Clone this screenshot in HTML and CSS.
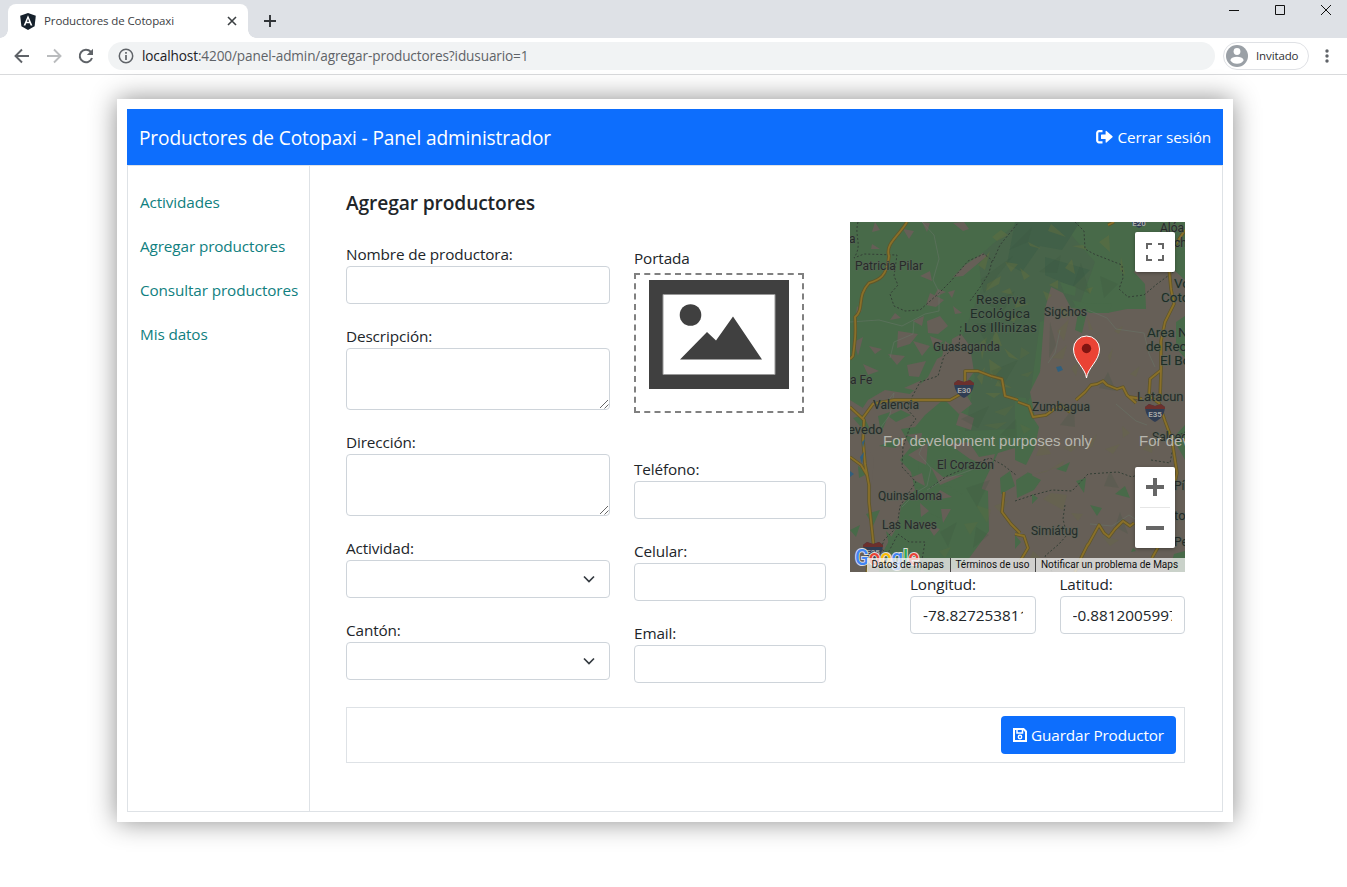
FILE: index.html
```html
<!DOCTYPE html>
<html lang="es">
<head>
<meta charset="utf-8">
<title>Productores de Cotopaxi</title>
<link rel="stylesheet" href="styles.css">
</head>
<body>
<header class="browser">
  <div class="tabstrip">
    <div class="tab">
      <svg class="favicon" width="16" height="17" viewBox="0 0 16 17"><path d="M8 0 15.8 2.8 14.6 13.2 8 17 1.4 13.2.2 2.8Z" fill="#15202b"/><path d="M8 2.3 3.6 12.6H5.4L6.3 10.3H9.7L10.6 12.6H12.4ZM8 5.8 9.1 8.7H6.9Z" fill="#fff" fill-rule="evenodd"/></svg>
      <span class="tab-title">Productores de Cotopaxi</span>
      <svg width="10" height="10" viewBox="0 0 10 10"><path d="M1 1 9 9M9 1 1 9" stroke="#3c4043" stroke-width="1.6"/></svg>
    </div>
    <svg class="newtab" width="12" height="12" viewBox="0 0 12 12"><path d="M6 0V12M0 6H12" stroke="#303337" stroke-width="1.9"/></svg>
    <svg class="window-buttons" width="104" height="12" viewBox="0 0 104 12"><path d="M0 6.5H10M46.500 1.500H55.500V10.500H46.500ZM92 1 102 11M102 1 92 11" fill="none" stroke="#111"/></svg>
  </div>
  <div class="toolbar">
    <div class="nav-icons">
      <svg width="16" height="16" viewBox="0 0 16 16"><path d="M15 8H2M8 1.500 1.500 8 8 14.500" fill="none" stroke="#5f6368" stroke-width="1.9"/></svg>
      <svg width="16" height="16" viewBox="0 0 16 16"><path d="M1 8H14M8 1.500 14.500 8 8 14.500" fill="none" stroke="#babcbe" stroke-width="1.9"/></svg>
      <svg width="16" height="16" viewBox="0 0 16 16"><path d="M14 10A6.300 6.300 0 1 1 12.700 3.700L14 5" fill="none" stroke="#5f6368" stroke-width="2"/><path d="M15 .8V7H8.800Z" fill="#5f6368"/></svg>
    </div>
    <div class="address">
      <svg width="16" height="16" viewBox="0 0 16 16"><circle cx="8" cy="8" r="6.700" fill="none" stroke="#5f6368" stroke-width="1.500"/><path d="M8 7V12M8 4V5.700" stroke="#5f6368" stroke-width="1.700"/></svg>
      <span class="url"><b>localhost</b>:4200/panel-admin/agregar-productores?idusuario=1</span>
    </div>
    <div class="profile">
      <svg width="22" height="22" viewBox="0 0 22 22"><circle cx="11" cy="11" r="11" fill="#9aa0a6"/><circle cx="11" cy="6.500" r="3.400" fill="#fff"/><path d="M4.300 15.200C5 12.800 8 11.800 11 11.800S17 12.800 17.700 15.200C16.300 17.500 14 18.800 11 18.800S5.700 17.500 4.300 15.200Z" fill="#fff"/></svg>
      <span>Invitado</span>
    </div>
    <svg class="dots" width="4" height="14" viewBox="0 0 4 14" fill="#5f6368"><circle cx="2" cy="2" r="1.700"/><circle cx="2" cy="7" r="1.700"/><circle cx="2" cy="12" r="1.700"/></svg>
  </div>
</header>

<main class="page">
  <section class="card">
    <div class="navbar">
      <span class="brand">Productores de Cotopaxi - Panel administrador</span>
      <a class="logout">
        <svg width="17" height="14" viewBox="0 0 17 14"><path d="M6.500 1.200H3A1.800 1.800 0 0 0 1.200 3V10.500A1.800 1.800 0 0 0 3 12.300H6.500" fill="none" stroke="#fff" stroke-width="2.200"/><path d="M5.600 4.500H9.600V1.300Q9.700.4 10.500 1L16.500 6.200Q16.900 6.700 16.500 7.200L10.500 12.500Q9.700 13 9.600 12.200V9H5.600Q5 9 5 8.400V5.100Q5 4.500 5.600 4.500Z" fill="#fff"/></svg>
        <span>Cerrar sesión</span>
      </a>
    </div>
    <div class="body">
      <nav class="sidebar"><a>Actividades</a><a>Agregar productores</a><a>Consultar productores</a><a>Mis datos</a></nav>
      <div class="content">
        <div class="columns">
          <div class="col col-data">
            <h1>Agregar productores</h1>
            <div class="field"><label>Nombre de productora:</label><div class="input"></div></div>
            <div class="field"><label>Descripción:</label><div class="input area"><svg class="grip" width="10" height="10" viewBox="0 0 10 10"><path d="M1 9 9 1M5.500 9.500 9.500 5.500" stroke="#666"/></svg></div></div>
            <div class="field"><label>Dirección:</label><div class="input area"><svg class="grip" width="10" height="10" viewBox="0 0 10 10"><path d="M1 9 9 1M5.500 9.500 9.500 5.500" stroke="#666"/></svg></div></div>
            <div class="field"><label>Actividad:</label><div class="input select"><svg width="12" height="8" viewBox="0 0 12 8"><path d="M1 1.500 6 6.500 11 1.500" fill="none" stroke="#343a40" stroke-width="1.700"/></svg></div></div>
            <div class="field"><label>Cantón:</label><div class="input select"><svg width="12" height="8" viewBox="0 0 12 8"><path d="M1 1.500 6 6.500 11 1.500" fill="none" stroke="#343a40" stroke-width="1.700"/></svg></div></div>
          </div>
          <div class="col col-contact">
            <label class="cover-label">Portada</label>
            <div class="cover">
              <svg width="140" height="109" viewBox="0 0 140 109"><path d="M0 0H140V109H0Z" fill="#404040"/><path d="M14 14.500H126V94.500H14Z" fill="#fff" stroke="#999"/><circle cx="41.500" cy="35" r="10.800" fill="#404040"/><path d="M31 79.500 58 52 67 60.500 84 36.500 113 79.500Z" fill="#404040"/></svg>
            </div>
            <div class="field"><label>Teléfono:</label><div class="input"></div></div>
            <div class="field"><label>Celular:</label><div class="input"></div></div>
            <div class="field"><label>Email:</label><div class="input"></div></div>
          </div>
          <div class="col col-map">
            <div class="map">
              <svg width="335" height="350" viewBox="0 0 335 350">
                <rect width="335" height="350" fill="#486a49"/>
                <!-- highland relief -->
                <path d="M128 35 168 0H210L245 40 230 82 190 100 180 175 165 207 115 209 125 155 112 115 132 65Z" fill="#48644a"/>
                <path d="M165 0H230L212 28 190 24 172 50 157 42ZM195 35 240 48 223 65 195 53Z" fill="#416048"/>
                <!-- lowland farmland -->
                <path d="M111 112 120 124 124 150 112 166 122 182 109 192 94 177 75 193 65 205 51 207 61 225 50 238 61 250 65 268 51 284 48 303 35 326 27 350H0V205L18 178 35 168 60 172 78 155 87 137 101 129 102 117Z" fill="#665f57"/>
                <path d="M201 65 213 71 221 86 257 91 277 87 296 87 295 62 284 50 293 38 310 45 335 30V350H70L80 325 102 315 120 300 134 260 148 231 171 224 165 209 185 195 180 170 190 150 195 87Z" fill="#665f57"/>
                <path d="M0 178 16 188 14 220 24 236 20 280 29 350H0Z" fill="#665f57"/>
                <!-- brown clearings in the forest -->
                <path d="M25 0 30 8 22 10ZM22 22 30 27 21 27ZM53 7 64 9 59 17ZM72 0 77 10 80 1ZM103 1 113 9 119 7 114 0ZM70 54 80 49 82 59ZM80 71 94 78 86 85 76 83ZM88 67 96 70 83 76ZM103 55 115 43 133 31 137 34 113 54ZM77 99 90 94 98 104 88 112 78 111ZM63 99 74 94 72 104ZM45 91 51 96 40 98ZM19 124 32 127 25 132ZM48 109 68 112 60 122 47 126ZM38 132 55 134 47 143ZM13 142 29 149 18 153ZM57 143 76 139 69 155 59 154ZM95 119 109 129 91 141ZM63 119 80 124 72 134ZM80 114 93 119 84 126ZM54 166 72 158 68 169ZM7 84 12 89 6 92ZM4 120 13 115 8 134ZM98 70 105 68 102 76ZM112 91 103 84 105 92Z" fill="#665f57"/>
                <!-- green islands in farmland -->
                <g fill="#486a49">
                  <path d="M3 196 13 193 20 207 10 204ZM28 194 40 190 31 211ZM8 244 19 251 9 256ZM16 292 30 288 23 304ZM0 308 10 303 6 315ZM38 194 51 188 61 193 46 200ZM29 224 50 215 46 226ZM36 309 49 322 40 328Z"/>
                  <path d="M165 175 176 176 179 190 189 205 185 225 176 243 165 238ZM166 258 177 251 191 258 184 268 167 276ZM206 247 220 240 216 250ZM226 259 236 256 234 271ZM265 272 275 264 280 276ZM240 283 252 286 247 294ZM182 272 188 276 182 282ZM165 313 171 320 165 327ZM222 78 238 82 262 81 259 91 240 91 226 85ZM228 91 236 94 232 111 225 108ZM210 60 226 65 225 74 214 71ZM326 100 335 94V136L326 126ZM315 40 335 29V58ZM323 216 335 203V238ZM324 332 335 329V350H319ZM177 250 182 252 184 261ZM283 326 286 329 281 330Z"/>
                  <path d="M68 229 90 213 111 211 132 223 125 247 105 258 82 260 69 248ZM66 266 99 264 113 273 101 301 79 291 65 281ZM92 294 120 263 138 269 139 309 112 346 76 350 57 340 76 321ZM150 256 160 249 165 264 151 272Z"/>
                </g>
                <path d="M58 233 78 221 76 243 66 238ZM60 256 72 251 75 264ZM81 245 93 255 114 253 90 263ZM90 268 102 275 84 278ZM99 222 119 220 129 235 145 232 141 245 120 237ZM70 281 79 289 71 295ZM91 287 101 287 93 301ZM77 303 90 307 84 314ZM110 190 124 196 121 208 106 203ZM55 213 72 211 71 218Z" fill="#665f57"/>
                <!-- vegetation facets -->
                <g fill="#66703d" opacity=".42">
                  <path d="M128 43 140 29 135 48ZM142 15 151 8 158 13 147 19ZM137 62 151 54 149 62 136 69ZM155 40 168 42 161 50ZM151 70 160 66 163 73ZM139 137 152 146 141 158ZM145 105 152 124 142 122ZM154 126 169 138 159 135ZM127 155 135 145 132 163ZM148 158 162 166 145 164ZM135 171 151 171 144 176ZM170 46 180 54 174 58ZM178 20 192 27 180 24ZM201 2 216 15 198 9ZM222 24 233 23 238 28ZM215 46 222 37 225 52ZM199 63 208 58 208 67ZM211 84 221 93 213 96ZM193 69 202 73 197 79ZM249 20 259 13 260 30ZM236 67 243 65 240 72ZM271 35 275 53 270 48ZM155 96 170 91 164 100ZM166 77 179 82 165 86ZM130 121 137 115 132 138Z"/>
                  <path opacity=".55" d="M207 109 219 97 214 119ZM202 136 217 123 213 137ZM221 146 229 140 226 154ZM237 94 243 108 239 108ZM258 134 263 126 260 141ZM171 125 180 131 170 137ZM170 153 183 149 178 155ZM186 234 193 216 201 232ZM196 250 215 238 212 244 185 252ZM193 277 201 271 217 273 213 288ZM170 202 181 207 174 212ZM221 291 233 292 228 299ZM213 225 229 222 221 230ZM272 204 280 211 273 216ZM255 227 270 222 263 232ZM126 283 141 288 137 301ZM114 302 128 300 120 313ZM89 329 101 325 95 336ZM144 284 159 278 151 291ZM183 329 193 338 180 336ZM252 314 269 318 260 324ZM235 226 247 212 242 225ZM280 152 290 144 286 155ZM264 109 273 104 269 112ZM292 227 304 218 302 231ZM144 190 164 183 155 194ZM133 203 157 200 147 207Z"/>
                </g>
                <g fill="#38513e" opacity=".18"><path d="M130 58 163 34 134 71ZM139 83 165 69 153 90ZM125 102 154 100 137 122ZM159 28 182 5 178 20ZM189 50 211 33 207 51ZM231 41 240 72 223 64ZM250 54 268 62 254 76ZM141 149 168 138 152 165ZM111 197 139 184 128 206ZM116 266 140 258 127 285ZM126 305 139 313 123 326ZM90 310 107 300 98 325ZM150 213 166 197 167 217ZM200 100 206 123 199 136ZM234 119 242 139 228 134ZM258 150 266 169 249 166ZM210 203 224 185 225 205ZM260 249 269 266 254 264ZM270 290 278 312 265 305Z"/></g>
                <!-- province borders and minor roads -->
                <path d="M8 0C4 15 13 22 4 36L14 32 47 33 44 54 48 63 40 72 44 84 55 89 70 88 88 72 101 59 118 39 134 32 143 39 150 23 168 1M142 39 139 51 131 64 120 79M111 104 109 123 94 134 88 154 70 160 62 175 57 187 66 197 60 205 53 225 52 245 66 260 50 284 47 305 34 318 31 327 38 331 48 312 59 320 75 320 70 350M80 266 97 254 140 236 153 243 166 253M225 0 234 9 235 27 244 32 272 43 273 56 269 67 278 75 294 73 307 62 326 48M165 279 183 273 202 268 222 269 238 252 268 250 282 255 294 250 296 245M215 283 213 297 217 313 209 322 195 334 202 350M301 238 320 241 325 215 335 210" fill="none" stroke="#343f36" stroke-dasharray="2 2"/>
                <g fill="none" stroke="#687568" stroke-width=".8" opacity=".65"><path d="M72 0 84 13 89 37 83 58 89 70 89 89 75 92 52 104 29 98 0 100M64 99 63 112 44 120 40 136M75 218 69 232 81 246 77 264 67 270 52 285M34 184 44 171 40 193 31 205M77 268 93 258 121 248 134 240M238 88 257 96 266 107 294 111 299 132 305 145M210 108 205 131 198 141M266 182 286 199 297 203M240 302 262 304 279 293 299 306"/></g>
                <!-- major roads -->
                <defs><path id="roads" d="M57 0C48 15 35 22 39 34C37 55 29 58 19 61C6 75 15 87 5 95C6 112 5 119 3 134L0 137M0 185 14 198 13 218 15 242 19 263 19 280 24 327M12 197 23 182 44 178 100 178 109 173 115 168V149L128 149 141 154 152 157 155 174 168 178M0 235 11 243 17 253M17 350 18 343M154 270 152 290 161 302 170 311M335 8 324 25 319 46 321 67 324 82 315 100 311 119 311 148 300 157 299 174 309 181 315 199 322 218 327 251 324 265 318 282 322 296 311 320 302 336M311 148 310 178M168 180 179 184 183 195 196 193 210 183 220 190M226 178 235 170 241 163 247 162 253 159 257 163 267 167 273 165 277 173 286 181M280 175 292 177M238 323 249 303 254 311 259 315 265 307 273 299 280 304 284 301M165 312 174 314 178 326 169 341M264 0 258 3M238 322 232 334 225 350"/></defs>
                <use href="#roads" class="road-edge"/>
                <use href="#roads" class="road-center"/>
                <path d="M206 145 211 144 213 148 208 150ZM10 235 14 230 12 242ZM0 249 4 252 0 255ZM12 220 15 217 13 226Z" fill="#315f7d"/>
                <!-- route shields -->
                <g id="shield"><path d="M104 161 108 158 114 160 120 158 124 161C123 171 119 173 114 176C109 173 105 171 104 161Z" fill="#303d53"/><path d="M104 161 108 158 114 160 120 158 124 161V163H104Z" fill="#6c302d"/></g>
                <use href="#shield" x="191" y="24"/><use href="#shield" x="-91" y="162"/><use href="#shield" x="175" y="-170"/>
                <g class="route-text"><text x="114" y="171">E30</text><text x="305" y="195">E35</text><text x="23" y="333">E25</text><text x="289" y="4">E20</text></g>
                <g class="places">
                  <text x="-1" y="21">a</text><text x="5" y="48" textLength="68">Patricia Pilar</text><text x="194" y="94" textLength="43">Sigchos</text><text x="83" y="129" textLength="67">Guasaganda</text><text x="0" y="162">a Fe</text><text x="23" y="186.500" textLength="46">Valencia</text><text class="big" x="-2" y="212">evedo</text><text x="182" y="188.500" textLength="58">Zumbagua</text><text class="big" x="287" y="179">Latacun</text><text x="302" y="219">Salced</text><text x="87" y="247" textLength="57">El Corazón</text><text x="28" y="278" textLength="64">Quinsaloma</text><text x="32" y="307" textLength="55">Las Naves</text><text x="181" y="313" textLength="47">Simiátug</text><text x="310" y="10">Alóa</text><text x="324" y="25">ch</text><text x="324" y="268">Píl</text><text class="big" x="324" y="298">to</text><text x="324" y="324">Pe</text>
                </g>
                <g class="parks"><text x="126" y="82" textLength="50">Reserva</text><text x="120" y="96" textLength="60">Ecológica</text><text x="114" y="110" textLength="73">Los Illinizas</text><text x="324" y="66">Vo</text><text x="311" y="80">Coto</text><text x="297" y="115">Area N</text><text x="296" y="129">de Rec</text><text x="310" y="143">El Bo</text></g>
                <g class="watermark"><text x="33" y="224" textLength="209">For development purposes only</text><text x="289" y="224">For dev</text></g>
                <text class="google" x="5" y="343" textLength="64" lengthAdjust="spacingAndGlyphs"><tspan fill="#4285f4">G</tspan><tspan fill="#ea4335">o</tspan><tspan fill="#fbbc05">o</tspan><tspan fill="#4285f4">g</tspan><tspan fill="#34a853">l</tspan><tspan fill="#ea4335">e</tspan></text>
                <path d="M236.500 156C235.500 146 223.500 139 223.500 127A13 13 0 0 1 249.500 127C249.500 139 237.500 146 236.500 156Z" fill="#ea4335" stroke="#fff"/><circle cx="236.500" cy="126.500" r="4.700" fill="#811411"/>
              </svg>
              <div class="map-button fullscreen"><svg width="18" height="18" viewBox="0 0 18 18"><path d="M1 6V1H6M12 1H17V6M17 12V17H12M6 17H1V12" fill="none" stroke="#666" stroke-width="2"/></svg></div>
              <div class="map-button zoom"><svg width="40" height="81" viewBox="0 0 40 81"><path d="M11 20H29M20 11V29M11 61H29" stroke="#666" stroke-width="4"/><path d="M5 40.500H35" stroke="#e6e6e6"/></svg></div>
              <div class="attribution"><span>Datos de mapas</span><span>Términos de uso</span><span>Notificar un problema de Maps</span></div>
            </div>
            <div class="coords">
              <div><label>Longitud:</label><div class="input"><span>-78.82725381164</span></div></div>
              <div><label>Latitud:</label><div class="input"><span>-0.88120059971</span></div></div>
            </div>
          </div>
        </div>
        <div class="actions">
          <button class="save"><svg width="14" height="14" viewBox="0 0 14 14"><path d="M1 1H10.500L13 3.500V13H1Z" fill="none" stroke="#fff" stroke-width="2"/><path d="M4 1V5H9.500V1" fill="none" stroke="#fff" stroke-width="1.500"/><circle cx="7" cy="9" r="1.700" fill="none" stroke="#fff" stroke-width="1.400"/></svg><span>Guardar Productor</span></button>
        </div>
      </div>
    </div>
  </section>
</main>
</body>
</html>
```
FILE: styles.css
```css
* { box-sizing: border-box; }
body { margin: 0; height: 887px; overflow: hidden; background: #fff; color: #212529; font: 15.3px/24px "Open Sans", "Noto Sans", sans-serif; letter-spacing: -.12px; }
svg { display: block; flex: none; letter-spacing: 0; }
.tabstrip { height: 38px; background: #dee1e6; display: flex; align-items: flex-start; }
.tab { width: 240px; height: 34px; margin: 4px 0 0 8px; padding: 0 11px 0 12px; background: #fff; border-radius: 8px 8px 0 0; display: flex; align-items: center; position: relative; }
.tab::before, .tab::after { content: ""; position: absolute; bottom: 0; width: 8px; height: 8px; }
.tab::before { left: -8px; background: radial-gradient(circle at 0 0, transparent 7.5px, #fff 8px); }
.tab::after { right: -8px; background: radial-gradient(circle at 100% 0, transparent 7.5px, #fff 8px); }
.tab-title { flex: 1; margin-left: 8px; font-size: 11.5px; color: #3c4043; }
.newtab { margin: 15px 0 0 16px; }
.window-buttons { margin: 4px 14px 0 auto; }
.toolbar { height: 37px; border-bottom: 1px solid #d9dadc; display: flex; align-items: center; padding: 0 18px 0 14px; }
.nav-icons { display: flex; gap: 16px; margin-right: 14px; }
.address { width: 1107px; height: 28px; border-radius: 14px; background: #f1f3f4; display: flex; align-items: center; padding-left: 10px; gap: 8px; font-size: 13.6px; color: #5f6368; }
.url b { font-weight: 400; color: #202124; }
.profile { margin-left: 8px; width: 86px; height: 28px; border: 1px solid #dfe1e5; border-radius: 14px; display: flex; align-items: center; gap: 8px; padding-left: 2px; font-size: 11.5px; color: #303134; }
.dots { margin-left: auto; }
.page { padding: 24px 114px 0 117px; }
.card { width: 1116px; height: 723px; padding: 10px; background: #fff; box-shadow: 0 0 25px rgba(0,0,0,.45); }
.navbar { height: 56px; background: #0d6efd; color: #fff; display: flex; align-items: center; justify-content: space-between; padding: 0 12px; }
.brand { font-size: 19.1px; padding-top: 1px; }
.logout { display: flex; align-items: center; gap: 4px; }
.body { height: 647px; border: 1px solid #dee2e6; display: flex; }
.sidebar { width: 182px; border-right: 1px solid #dee2e6; padding: 14px 12px; display: flex; flex-direction: column; white-space: nowrap; }
.sidebar a { height: 44px; line-height: 44px; color: #108080; }
.content { width: 875px; padding-left: 36px; }
.columns { display: flex; gap: 24px; height: 541px; }
.col-data { width: 264px; padding-top: 25px; }
.col-contact { width: 192px; padding-top: 80px; }
.col-map { width: 335px; padding-top: 56px; }
h1 { margin: 0 0 27px; font-size: 19.2px; line-height: 24px; font-weight: 600; }
label { display: block; }
.field { margin-bottom: 20px; }
.input { height: 38px; border: 1px solid #ced4da; border-radius: 4px; padding: 6px 12px; position: relative; letter-spacing: 0; }
.area { height: 62px; }
.grip { position: absolute; right: 0; bottom: 0; }
.select { display: flex; align-items: center; justify-content: flex-end; padding-right: 14px; }
.cover-label { margin-bottom: 3px; }
.cover { width: 170px; height: 140px; border: 2px dashed #808080; padding: 5px 13px; margin-bottom: 44px; }
.map { height: 350px; position: relative; overflow: hidden; letter-spacing: 0; }
.road-edge, .road-center { fill: none; stroke-linejoin: round; }
.road-edge { stroke: #605629; stroke-width: 3.4px; }
.road-center { stroke: #8a7029; stroke-width: 1.8px; }
.places, .parks { font: 12px Roboto, sans-serif; fill: #262b29; stroke: #586457; stroke-width: 1px; paint-order: stroke; }
.places .big { font-size: 13px; }
.parks { font-size: 13.5px; fill: #1e2d27; }
.route-text { font: bold 8px Roboto, sans-serif; fill: #a4a6a5; text-anchor: middle; }
.watermark { font: 15px "Liberation Sans", sans-serif; fill: #b7b6ae; }
.google { font: 500 22px Roboto, sans-serif; stroke: #ddd; stroke-width: 2px; paint-order: stroke; }
.map-button { position: absolute; right: 10px; width: 40px; background: #fff; border-radius: 2px; box-shadow: 0 1px 4px -1px rgba(0,0,0,.5); }
.fullscreen { top: 10px; height: 40px; display: grid; place-items: center; }
.zoom { top: 245px; height: 81px; }
.attribution { position: absolute; left: 17px; right: 0; bottom: 0; height: 14px; display: flex; background: rgba(245,245,245,.75); font: 10px/14px Roboto, sans-serif; color: #111; white-space: nowrap; }
.attribution span { padding: 0 6px 0 4.500px; }
.attribution span + span { border-left: 1px solid #454545; }
.coords { display: flex; gap: 24px; margin-left: 60px; }
.coords > div { flex: 1; min-width: 0; }
.input span { display: block; overflow: hidden; white-space: nowrap; }
.actions { height: 56px; border: 1px solid #dee2e6; width: 839px; padding: 8px; display: flex; justify-content: flex-end; }
.save { width: 175px; height: 38px; padding: 0; border: 0; border-radius: 4px; background: #0d6efd; color: #fff; font: inherit; letter-spacing: inherit; display: flex; align-items: center; justify-content: center; gap: 4px; white-space: nowrap; }
```
